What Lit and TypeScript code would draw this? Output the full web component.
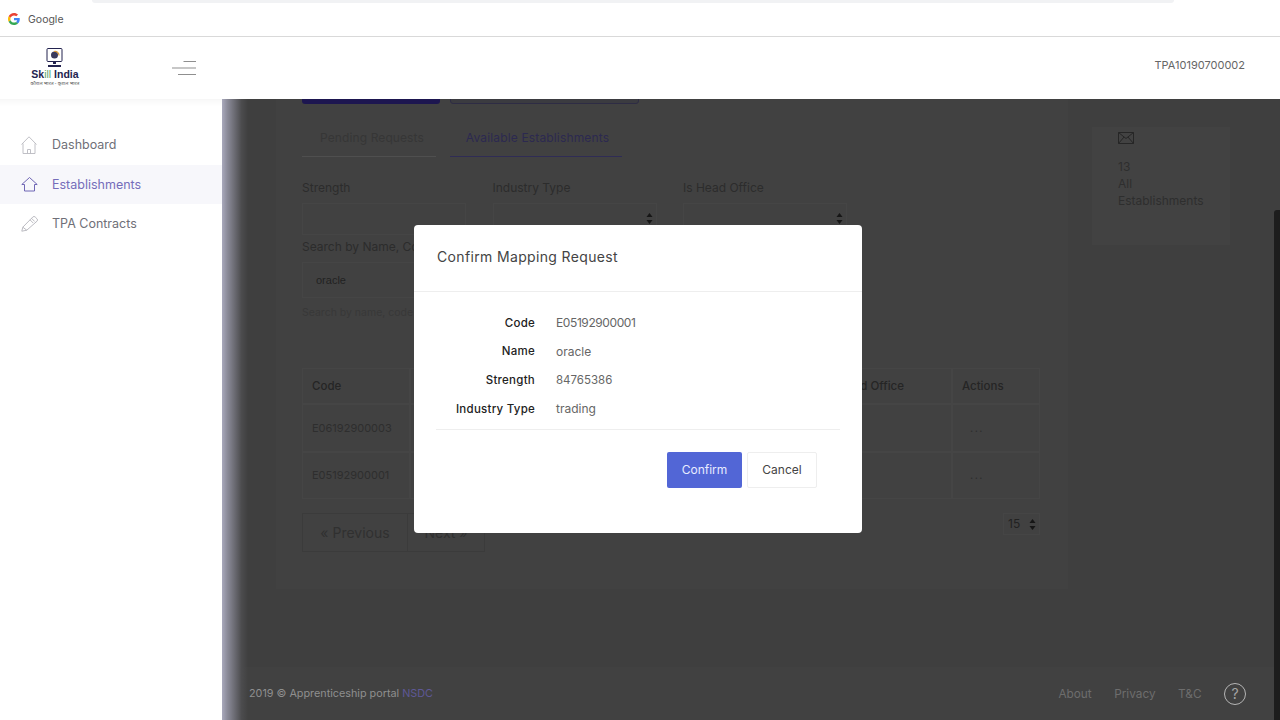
import { LitElement, html, css, svg } from "lit";
import { customElement } from "lit/decorators.js";

const homeDoor = svg`<path d="M.5 8.500 8 .8l7.500 7.700M2 7.500v10h12v-10M6.500 17.500v-4h3v4" fill="none" stroke="#b9b9c0" stroke-width=".9"/>`;
const homeActive = svg`<path d="M.8 9.500 8.500 2.500 16.200 9.500h-2.700v6.500H3.500V9.500z" fill="none" stroke="#6f66b5" stroke-width="1" stroke-linejoin="round"/>`;
const pencil = svg`<path d="M.8 16.200l1-4L11.800 2a1.700 1.700 0 0 1 2.400 0l1.800 1.800a1.700 1.700 0 0 1 0 2.400L5.800 15.200zM1.800 12.200 5.800 15.200M10.500 3.300l3.200 3.200M9 4.800l3.200 3.200" fill="none" stroke="#b4b4bb" stroke-width=".9"/>`;

@customElement("app-root")
export class AppRoot extends LitElement {
  static styles = css`
    :host { display: block; width: 1280px; height: 720px; overflow: hidden; position: relative; background: #fff;
      font-family: Inter, "Open Sans", "Liberation Sans", sans-serif; font-size: 12.500px; color: #555; }
    * { box-sizing: border-box; }
    .browser { height: 37px; border-bottom: 1px solid #d9d9d9; display: flex; align-items: center; gap: 8px; padding: 2px 0 0 8px; position: relative; color: #555; font-size: 10.500px; }
    .browser-pill { position: absolute; left: 92px; top: 0; width: 1082px; height: 3px; background: #f1f2f4; border-radius: 0 0 8px 8px; }
    .topbar { height: 62px; display: flex; align-items: center; background: #fff; position: relative; z-index: 2; }
    .logo { width: 172px; padding-left: 30px; display: flex; flex-direction: column; align-items: flex-start; margin-top: -2px; }
    .logo-mark { margin-left: 16px; display: block; margin-bottom: 1px; }
    .logo-name { font: 700 10.500px/11px "Liberation Sans", sans-serif; color: #23234f; width: 50px; text-align: center; white-space: nowrap; }
    .logo-name .t { color: #5aa469; font-weight: 400; }
    .logo-sub { font: 5px/6px "Noto Sans", "DejaVu Sans", sans-serif; color: #555; width: 50px; text-align: center; white-space: nowrap; overflow: hidden; height: 6px; }
    .burger { display: block; }
    .user { margin-left: auto; padding-right: 35px; font-size: 11px; color: #666; margin-top: -6px; }
    .body { display: flex; height: 621px; }
    .side { width: 222px; flex: none; background: #fff; padding-top: 26px; box-shadow: inset 0 10px 10px -10px #eee; }
    .nav { height: 39.500px; display: flex; align-items: center; gap: 14px; padding-left: 21px; font-size: 12.500px; color: #6f6f78; }
    .nav.on { background: #f7f7fb; color: #756dba; }
    .nav svg { width: 17px; height: 18px; flex: none; }
    .main { flex: 1; position: relative; background: #3f3f3f; display: flex; flex-direction: column; overflow: hidden; }
    .fade { position: absolute; left: 0; top: 0; bottom: 0; width: 26px; background: linear-gradient(90deg, #a9a9bc, #8c8c9a 20%, #4c4c4e 75%, rgba(62,62,62,0)); }
    .scroll { position: absolute; right: 0; top: 111px; bottom: 0; width: 6px; background: #1d1d1d; border-radius: 3px 0 0 0; }
    .content { flex: 1; display: flex; padding-left: 54px; align-items: flex-start; min-height: 0; }
    .card { width: 792px; height: 490px; background: #414141; padding: 0 28px 0 26px; flex: none; }
    .actions { display: flex; gap: 10px; height: 5px; align-items: flex-end; }
    .btn-a { width: 138px; height: 30px; background: #1d1650; border-radius: 3px; flex: none; }
    .btn-b { width: 189px; height: 30px; background: #3b3b40; border: 1px solid #2e2c44; border-radius: 3px; flex: none; }
    .tabs { display: flex; gap: 14px; margin-top: 21px; }
    .tab { height: 32px; width: 134px; padding-left: 6px; text-align: center; line-height: 26px; border-bottom: 1px solid #4f4f4f; color: #363636; font-size: 12px; letter-spacing: .1px; white-space: nowrap; }
    .tab.on { width: 172px; padding-left: 3px; letter-spacing: .15px; color: #2c2950; border-bottom-color: #2f2c55; }
    .filters { display: flex; gap: 26.500px; margin-top: 21px; }
    .field { width: 164px; flex: none; }
    label { display: block; font-size: 12px; line-height: 20px; color: #2c2c2c; white-space: nowrap; }
    .box { height: 32px; margin-top: 5px; border: 1px solid #454545; position: relative; }
    .arrows { position: absolute; right: 3px; top: 9px; display: block; }
    .search { margin-top: 2px; width: 164px; }
    .search .box { height: 36px; margin-top: 5px; padding-left: 13px; font: 11px/34px "Liberation Sans", sans-serif; color: #222; }
    .hint { margin-top: 8px; font-size: 10.500px; line-height: 14px; color: #383838; white-space: nowrap; }
    .table { margin-top: 48px; display: grid; grid-template-columns: 108px 135px 130px 141px 136px 88px; width: 738px; }
    .cell { height: 47.500px; border: 1px solid #454545; padding: 0 9px; display: flex; align-items: center; font-size: 11px; color: #2e2e2e; white-space: nowrap; }
    .head { height: 36px; font-size: 11.500px; color: #252525; font-weight: 500; }
    .dots { padding-left: 17px; letter-spacing: 1.500px; color: #2e2e2e; font-size: 11px; }
    .pager { display: flex; margin-top: 14px; width: 738px; align-items: flex-start; }
    .pg { height: 39px; border: 1px solid #3b3b3b; display: flex; align-items: center; justify-content: center; font-size: 14px; color: #303030; }
    .prev { width: 106px; }
    .next { width: 77px; border-left: 0; }
    .size { margin-left: auto; width: 37px; height: 22px; border: 1px solid #454545; position: relative; font-size: 12px; color: #222; line-height: 19px; padding-left: 4px; }
    .size .arrows { top: 5px; right: 3px; }
    .stat { width: 138px; height: 118px; margin: 28px 0 0 24px; background: #424242; padding: 5px 0 0 26px; color: #2e2e2e; font-size: 12px; line-height: 17px; flex: none; }
    .stat svg { display: block; margin-bottom: 14px; }
    .footer { height: 53px; background: #414141; display: flex; align-items: center; padding: 0 34px 0 27px; font-size: 10.800px; color: #8f8f8f; flex: none; }
    .footer b { font-weight: 400; color: #5e5896; margin-left: 3px; }
    .links { margin-left: auto; display: flex; align-items: center; gap: 22.500px; font-size: 11.800px; color: #6d6d6d; }
    .help { display: block; }
    .modal { position: absolute; left: 414px; top: 225px; width: 448px; height: 308px; background: #fff; border-radius: 4px; z-index: 3; }
    .mhead { height: 67px; padding: 22px 23px 0; border-bottom: 1px solid #eee; font-size: 14px; letter-spacing: .35px; line-height: 20px; color: #444; }
    .rows { margin: 16.500px 22px 0; border-bottom: 1px solid #eee; padding-bottom: 6.500px; display: grid; grid-template-columns: 99px 1fr; column-gap: 21px; grid-auto-rows: 28.600px; align-items: center; font-size: 11.500px; }
    .k { text-align: right; color: #222; font-weight: 500; letter-spacing: .25px; white-space: nowrap; }
    .v { color: #666; font-size: 12px; }
    .v.code { letter-spacing: -.4px; }
    .v.num { font-size: 11.500px; }
    .mfoot { display: flex; justify-content: flex-end; gap: 5px; padding: 22px 45px 0 0; }
    .mbtn { height: 36px; padding-bottom: 2px; display: flex; align-items: center; justify-content: center; border-radius: 2px; font-size: 12px; }
    .ok { width: 75px; background: #5266d6; color: #e8ebff; }
    .no { width: 70px; background: #fff; border: 1px solid #eee; color: #444; }
  `;

  private arrows() {
    return html`<svg class="arrows" width="7" height="11" viewBox="0 0 7 11"><path d="M3.500 0 6.500 4h-6zM3.500 11l3-4h-6z" fill="#161616"/></svg>`;
  }

  render() {
    return html`
      <div class="browser">
        <div class="browser-pill"></div>
        <svg width="12" height="12" viewBox="0 0 48 48">
          <path fill="#EA4335" d="M24 9.500c3.500 0 6.700 1.200 9.200 3.600l6.900-6.900C35.900 2.400 30.500 0 24 0 14.600 0 6.500 5.400 2.600 13.200l8 6.200C12.400 13.700 17.700 9.500 24 9.500z"/>
          <path fill="#4285F4" d="M47 24.500c0-1.600-.2-3.100-.4-4.500H24v9h12.900c-.6 3-2.200 5.400-4.800 7.100l7.700 6c4.500-4.200 7.200-10.300 7.200-17.600z"/>
          <path fill="#FBBC05" d="M10.500 28.600c-.5-1.400-.8-3-.8-4.600s.3-3.200.8-4.600l-8-6.200C.9 16.400 0 20.100 0 24s.9 7.600 2.600 10.800l7.900-6.200z"/>
          <path fill="#34A853" d="M24 48c6.500 0 11.900-2.100 15.900-5.900l-7.700-6c-2.200 1.400-4.900 2.300-8.200 2.300-6.300 0-11.600-4.200-13.500-9.900l-8 6.200C6.500 42.600 14.600 48 24 48z"/>
        </svg>
        <span>Google</span>
      </div>
      <div class="topbar">
        <div class="logo">
          <svg class="logo-mark" width="18" height="20" viewBox="0 0 18 20">
            <rect x="1" y="0.500" width="15" height="13" rx="1" fill="#fff" stroke="#23234f"/>
            <circle cx="8.500" cy="7" r="3.500" fill="#3a3a5c"/>
            <path d="M8 3.500a4 4 0 0 1 5 4" fill="none" stroke="#d99a3c" stroke-width="1.200"/>
            <path d="M7 14h3v2H7zM2 17h13v2H2z" fill="#23234f"/>
          </svg>
          <div class="logo-name">Sk<span class="t">ill</span> India</div>
          <div class="logo-sub">कौशल भारत - कुशल भारत</div>
        </div>
        <svg class="burger" width="24" height="14" viewBox="0 0 24 14">
          <path d="M11.500 .5H24M0 7H24M6 13.500H24" stroke="#8f8f8f" stroke-width="1" fill="none"/>
        </svg>
        <div class="user">TPA10190700002</div>
      </div>
      <div class="body">
        <nav class="side">
          <div class="nav"><svg viewBox="0 0 17 18">${homeDoor}</svg>Dashboard</div>
          <div class="nav on"><svg viewBox="0 0 17 18">${homeActive}</svg>Establishments</div>
          <div class="nav"><svg viewBox="0 0 17 18">${pencil}</svg>TPA Contracts</div>
        </nav>
        <main class="main">
          <div class="content">
            <section class="card">
              <div class="actions"><div class="btn-a"></div><div class="btn-b"></div></div>
              <div class="tabs">
                <div class="tab">Pending Requests</div>
                <div class="tab on">Available Establishments</div>
              </div>
              <div class="filters">
                <div class="field"><label>Strength</label><div class="box"></div></div>
                <div class="field"><label>Industry Type</label><div class="box">${this.arrows()}</div></div>
                <div class="field"><label>Is Head Office</label><div class="box">${this.arrows()}</div></div>
              </div>
              <div class="search">
                <label>Search by Name, Code</label>
                <div class="box">oracle</div>
                <div class="hint">Search by name, code</div>
              </div>
              <div class="table">
                <div class="cell head">Code</div><div class="cell head"></div><div class="cell head"></div><div class="cell head"></div><div class="cell head">Is Head Office</div><div class="cell head">Actions</div>
                <div class="cell">E06192900003</div><div class="cell"></div><div class="cell"></div><div class="cell"></div><div class="cell"></div><div class="cell dots">...</div>
                <div class="cell">E05192900001</div><div class="cell"></div><div class="cell"></div><div class="cell"></div><div class="cell"></div><div class="cell dots">...</div>
              </div>
              <div class="pager">
                <div class="pg prev">« Previous</div>
                <div class="pg next">Next »</div>
                <div class="size">15${this.arrows()}</div>
              </div>
            </section>
            <aside class="stat">
              <svg width="16" height="12" viewBox="0 0 16 12"><path d="M.5.5h15v11H.5zM.5.5 8 6.500 15.500.5M.5 11.500 6 5M15.500 11.500 10 5" fill="none" stroke="#262626"/></svg>
              <div>13</div><div>All</div><div>Establishments</div>
            </aside>
          </div>
          <footer class="footer">
            <span>2019 © Apprenticeship portal<b>NSDC</b></span>
            <div class="links">
              <span>About</span><span>Privacy</span><span>T&amp;C</span>
              <svg class="help" width="22" height="22" viewBox="0 0 22 22"><circle cx="11" cy="11" r="10.500" fill="none" stroke="#b5b5b5"/><text x="11" y="16" text-anchor="middle" font-size="14" fill="#a5a5a5" font-family="Inter, sans-serif">?</text></svg>
            </div>
          </footer>
          <div class="fade"></div>
          <div class="scroll"></div>
        </main>
      </div>
      <div class="modal" role="dialog">
        <div class="mhead">Confirm Mapping Request</div>
        <div class="rows">
          <div class="k">Code</div><div class="v code">E05192900001</div>
          <div class="k">Name</div><div class="v">oracle</div>
          <div class="k">Strength</div><div class="v num">84765386</div>
          <div class="k">Industry Type</div><div class="v">trading</div>
        </div>
        <div class="mfoot">
          <div class="mbtn ok">Confirm</div>
          <div class="mbtn no">Cancel</div>
        </div>
      </div>
    `;
  }
}
